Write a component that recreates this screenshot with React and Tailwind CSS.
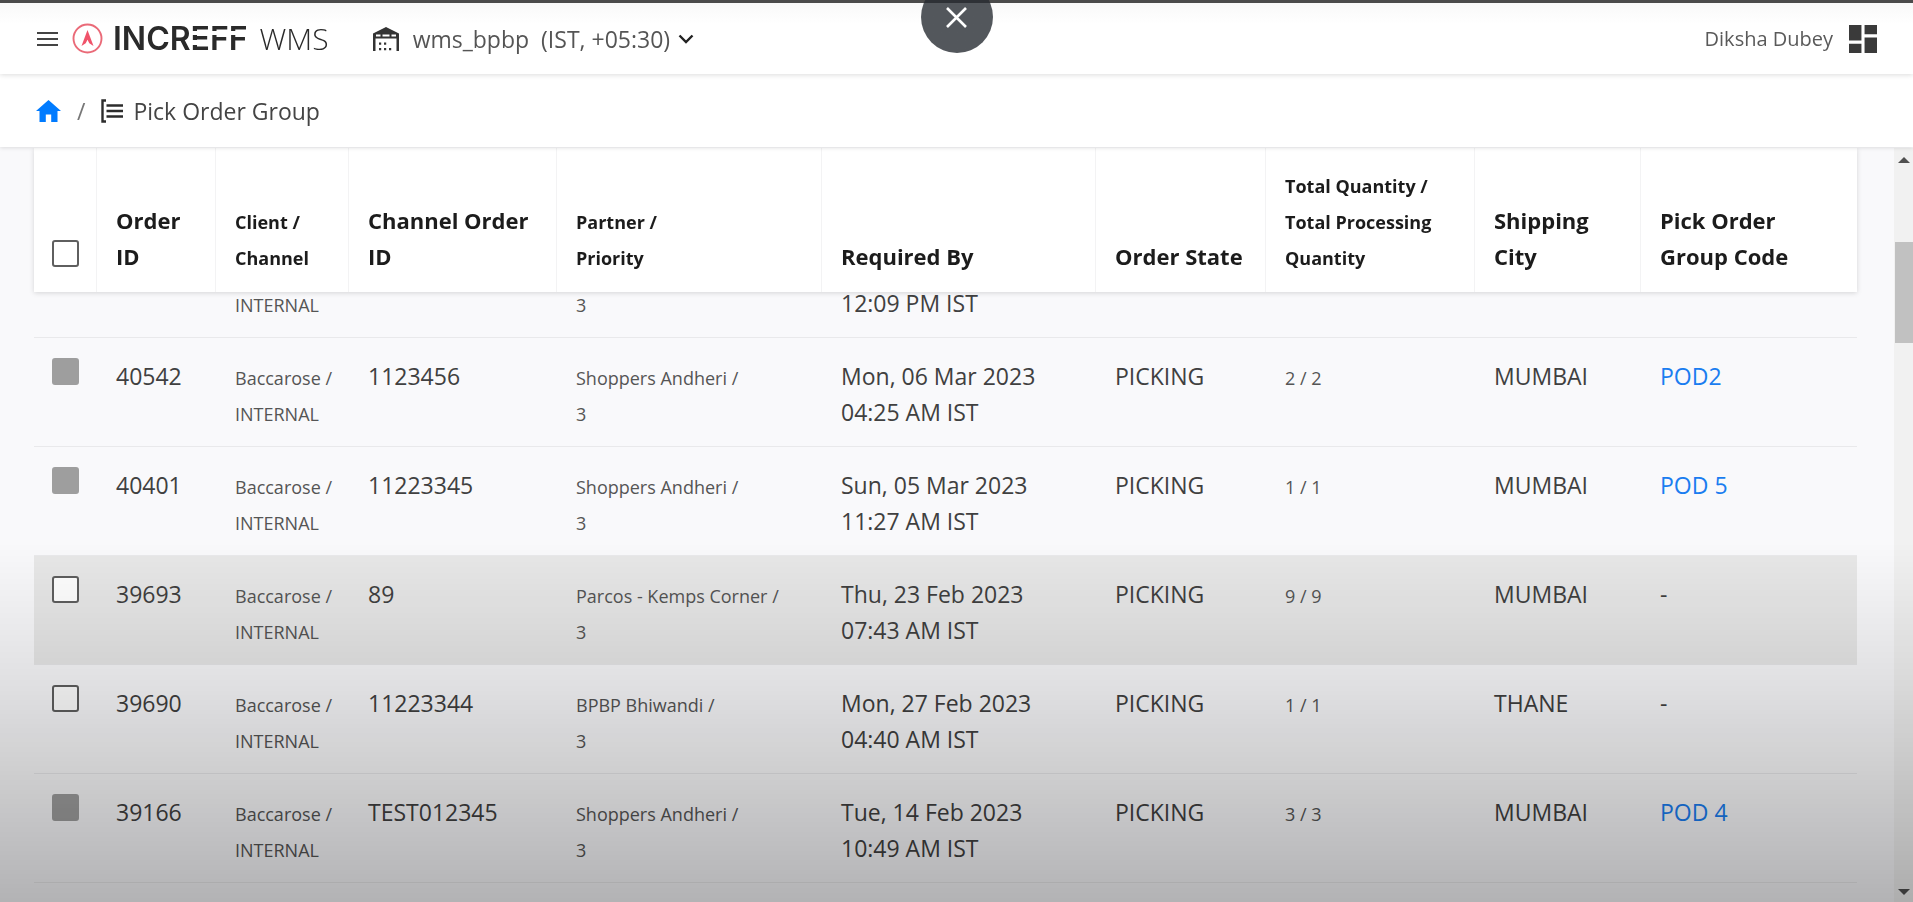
import React, { useLayoutEffect, useRef, useState } from 'react';

const columns = [
    { label: ['Order', 'ID'], width: 119 },
    { label: ['Client /', 'Channel'], width: 133, small: true },
    { label: ['Channel Order', 'ID'], width: 208 },
    { label: ['Partner /', 'Priority'], width: 265, small: true },
    { label: ['Required By'], width: 274 },
    { label: ['Order State'], width: 170 },
    { label: ['Total Quantity /', 'Total Processing', 'Quantity'], width: 209, small: true },
    { label: ['Shipping', 'City'], width: 166 },
    { label: ['Pick Order', 'Group Code'], width: 217 }
];

const orders = [
    { id: '40542', channelOrderId: '1123456', partner: 'Shoppers Andheri', date: 'Mon, 06 Mar 2023', time: '04:25 AM IST', qty: '2 / 2', city: 'MUMBAI', group: 'POD2' },
    { id: '40401', channelOrderId: '11223345', partner: 'Shoppers Andheri', date: 'Sun, 05 Mar 2023', time: '11:27 AM IST', qty: '1 / 1', city: 'MUMBAI', group: 'POD 5' },
    { id: '39693', channelOrderId: '89', partner: 'Parcos - Kemps Corner', date: 'Thu, 23 Feb 2023', time: '07:43 AM IST', qty: '9 / 9', city: 'MUMBAI', active: true },
    { id: '39690', channelOrderId: '11223344', partner: 'BPBP Bhiwandi', date: 'Mon, 27 Feb 2023', time: '04:40 AM IST', qty: '1 / 1', city: 'THANE' },
    { id: '39166', channelOrderId: 'TEST012345', partner: 'Shoppers Andheri', date: 'Tue, 14 Feb 2023', time: '10:49 AM IST', qty: '3 / 3', city: 'MUMBAI', group: 'POD 4' }
];

const cell = 'pl-5 pt-5 pb-4 border-b border-[#e9e9eb]';
const small = 'text-[18px] leading-none text-[#555]';

const WarehouseIcon = () => (
    <svg className="w-[26px] h-[24px]" viewBox="0 0 26 24" fill="#333" aria-hidden="true">
        <path fillRule="evenodd" d="M13 0 26 6.500V24h-2.500V11.500H2.500V24H0V6.500ZM3 7.500V9.500H7.500V7.500ZM9.500 7.500V9.500H16.500V7.500ZM18.500 7.500V9.500H23V7.500Z" />
        <path d="M6 15.500h2.200v2.200H6zM11 15.500h2.200v2.200H11zM6 21h2.200v2.200H6zM11 21h2.200v2.200H11zM16 21h2.200v2.200H16z" />
    </svg>
);

const LogoMark = () => (
    <svg className="w-[31px] h-[31px]" viewBox="0 0 31 31" aria-hidden="true">
        <circle cx="15.500" cy="15.500" r="14" fill="none" stroke="#ea6a78" strokeWidth="1.900" />
        <path d="M15.500 7 21.500 23 17.300 20.300 15.500 16.800 13.700 20.300 9.500 23Z" fill="#f0536a" />
    </svg>
);

const TopBar = () => (
    <header className="relative z-30 shrink-0 h-[74px] pl-9 pr-9 flex items-center justify-between border-t-[3px] border-[#4b4b4b] bg-linear-to-b from-[#f9f9f9] to-white to-30% shadow-[0_1px_5px_rgba(0,0,0,0.14)]">
        <div className="flex items-center">
            <button aria-label="Menu" className="mr-3.5">
                <svg className="w-[22px] h-4" viewBox="0 0 22 16" stroke="#444" strokeWidth="2" aria-hidden="true">
                    <path d="M1 2H22M1 8H22M1 14H22" />
                </svg>
            </button>
            <LogoMark />
            {/* The E and both Fs have their stems cut between the bars */}
            <span className="ml-2.5 font-[Inter] font-semibold text-[32px] leading-9 text-[#2a2a2a] whitespace-nowrap">
                INCR
                <span className="relative before:absolute before:inset-x-0 before:top-[12px] before:h-[4px] before:bg-white after:absolute after:left-0 after:w-[20px] after:top-[21px] after:h-[5px] after:bg-white">E</span>
                <span className="relative before:absolute before:inset-x-0 before:top-[12px] before:h-[4px] before:bg-white">FF</span>
            </span>
            <span className="ml-3 text-[30px] leading-9 font-light text-[#2a2a2a]">WMS</span>
            <button aria-haspopup="listbox" className="ml-11 flex items-center text-[23px] leading-9 text-[#555]">
                <WarehouseIcon />
                <span className="ml-3.5">wms_bpbp</span>
                <span className="ml-3">(IST, +05:30)</span>
                <svg className="ml-2 w-4 h-[10px]" viewBox="0 0 16 10" fill="none" stroke="#222" strokeWidth="2.400" aria-hidden="true">
                    <path d="M1.500 1.500 8 8 14.500 1.500" />
                </svg>
            </button>
        </div>
        <div className="flex items-center gap-4">
            <span className="text-[20px] leading-9 text-[#5a5a5a]">Diksha Dubey</span>
            <button aria-label="Apps">
                <svg className="w-7 h-7" viewBox="3 3 18 18" fill="#3a3a3a" aria-hidden="true">
                    <path d="M3 13h8V3H3zM3 21h8v-6H3zM13 21h8V11h-8zM13 3v6h8V3z" />
                </svg>
            </button>
        </div>
    </header>
);

const Breadcrumb = () => (
    <nav aria-label="Breadcrumb" className="relative z-20 shrink-0 h-[73px] pl-9 flex items-center bg-white shadow-[0_1px_4px_rgba(0,0,0,0.12)] text-[23px] leading-9 text-[#444]">
        <a href="#home" aria-label="Home">
            <svg className="w-[25px] h-[22px]" viewBox="0 0 25 22" fill="#007bff" aria-hidden="true">
                <path d="M12.500 0 25 11H21.500V22H15.200V14.500H9.800V22H3.500V11H0Z" />
            </svg>
        </a>
        <span className="mx-4 text-[#777]">/</span>
        <svg className="w-[22px] h-[24px]" viewBox="0 0 22 24" fill="none" stroke="#2c2c2c" strokeWidth="2.400" aria-hidden="true">
            <path d="M5 1.500H1.500V22.500H5M5.500 6.500H22M5.500 12H22M5.500 17.500H22" />
        </svg>
        <span className="ml-2.5">Pick Order Group</span>
    </nav>
);

const Checkbox = ({ label, disabled }) => {
    const [checked, setChecked] = useState(false);
    return (
        <input
            type="checkbox"
            aria-label={label}
            disabled={disabled}
            checked={checked}
            onChange={() => setChecked(!checked)}
            className="block appearance-none w-[27px] h-[27px] rounded-[3px] border-[2px] border-[#5f5f5f] bg-white checked:bg-[#007bff] disabled:border-[#9e9e9e] disabled:bg-[#9e9e9e]"
        />
    );
};

const OrderRow = ({ order }) => (
    <tr className={order.active ? 'bg-[#e8e8e8]' : 'hover:bg-[#e8e8e8]'}>
        <td className="pl-[18px] pt-5 border-b border-[#e9e9eb]">
            <Checkbox label={`Select order ${order.id}`} disabled={Boolean(order.group)} />
        </td>
        <td className={cell}>{order.id}</td>
        <td className={cell}>
            <span className={small}>Baccarose /</span><br />
            <span className={small}>INTERNAL</span>
        </td>
        <td className={cell}>{order.channelOrderId}</td>
        <td className={cell}>
            <span className={small}>{order.partner} /</span><br />
            <span className={small}>3</span>
        </td>
        <td className={cell}>{order.date}<br />{order.time}</td>
        <td className={cell}>PICKING</td>
        <td className={cell}><span className={small}>{order.qty}</span></td>
        <td className={cell}>{order.city}</td>
        <td className={cell}>
            {order.group ? <a href="#group" className="text-[#1a7df0]">{order.group}</a> : '-'}
        </td>
    </tr>
);

// Row that is mostly scrolled under the sticky header
const ScrolledRow = () => (
    <tr className="align-bottom">
        <td className={`${cell} h-[109px]`} />
        <td className={cell} />
        <td className={cell}><span className={small}>INTERNAL</span></td>
        <td className={cell} />
        <td className={cell}><span className={small}>3</span></td>
        <td className={cell}>12:09 PM IST</td>
        <td className={cell} />
        <td className={cell} />
        <td className={cell} />
        <td className={cell} />
    </tr>
);

const Scrollbar = () => (
    <div className="shrink-0 w-[19px] flex flex-col bg-[#f1f1f1]">
        <button aria-label="Scroll up" className="h-6 flex justify-center items-center">
            <svg className="w-3 h-[6px]" viewBox="0 0 12 6" fill="#505050" aria-hidden="true"><path d="M6 0 12 6H0Z" /></svg>
        </button>
        <div className="flex-1 pt-[70px]">
            <div className="ml-px h-[101px] bg-[#c1c1c1]" />
        </div>
        <button aria-label="Scroll down" className="h-5 flex justify-center items-center">
            <svg className="w-3 h-[6px]" viewBox="0 0 12 6" fill="#505050" aria-hidden="true"><path d="M0 0H12L6 6Z" /></svg>
        </button>
    </div>
);

const App = () => {
    const scroller = useRef(null);

    useLayoutEffect(() => {
        scroller.current.scrollTop = 63;
    }, []);

    return (
        <div className="relative h-screen flex flex-col overflow-hidden bg-[#f9f9fb] font-['Open_Sans','Segoe_UI',sans-serif]">
            <TopBar />
            <Breadcrumb />

            <main className="flex-1 min-h-0 flex pt-px">
                <div ref={scroller} className="flex-1 min-w-0 pl-[34px] pr-[37px] overflow-y-auto [scrollbar-width:none]">
                    <div className="pb-24">
                        <table className="w-full table-fixed border-separate border-spacing-0 text-left text-[23px] leading-9 text-[#404040]">
                            <colgroup>
                                <col style={{ width: 62 }} />
                                {columns.map((col) => (
                                    <col key={col.label[0]} style={{ width: col.width }} />
                                ))}
                            </colgroup>
                            <thead className="sticky top-0 z-10 bg-white text-[#1c1c1c] shadow-[0_1px_5px_rgba(0,0,0,0.15)]">
                                <tr>
                                    <th className="pl-[18px] pb-[25px] align-bottom">
                                        <Checkbox label="Select all orders" />
                                    </th>
                                    {columns.map((col) => (
                                        <th key={col.label[0]} className="pl-[19px] py-[18px] align-bottom text-[22px] leading-9 font-bold border-l border-[#f3f3f4] whitespace-nowrap">
                                            {col.label.map((line, i) => (
                                                <React.Fragment key={line}>
                                                    {i > 0 && <br />}
                                                    <span className={col.small ? 'text-[18px] leading-none' : ''}>{line}</span>
                                                </React.Fragment>
                                            ))}
                                        </th>
                                    ))}
                                </tr>
                            </thead>
                            <tbody className="align-top">
                                <ScrolledRow />
                                {orders.map((order) => (
                                    <OrderRow key={order.id} order={order} />
                                ))}
                            </tbody>
                        </table>
                    </div>
                </div>
                <Scrollbar />
            </main>

            {/* Shade rising from the bottom edge */}
            <div className="absolute inset-x-0 bottom-0 h-[360px] z-20 pointer-events-none bg-linear-to-b from-black/0 via-black/10 via-40% to-black/28" />

            <button
                aria-label="Close"
                className="absolute z-40 -top-[19px] left-1/2 -translate-x-1/2 w-[72px] h-[72px] rounded-full flex justify-center items-center bg-linear-to-b from-[#2e3136] from-[22px] to-[#53575c] to-[22px]"
            >
                <svg className="w-[21px] h-[21px]" viewBox="0 0 21 21" stroke="#fff" strokeWidth="2.600" aria-hidden="true">
                    <path d="M1 1 20 20M20 1 1 20" />
                </svg>
            </button>
        </div>
    );
};

export default App;
